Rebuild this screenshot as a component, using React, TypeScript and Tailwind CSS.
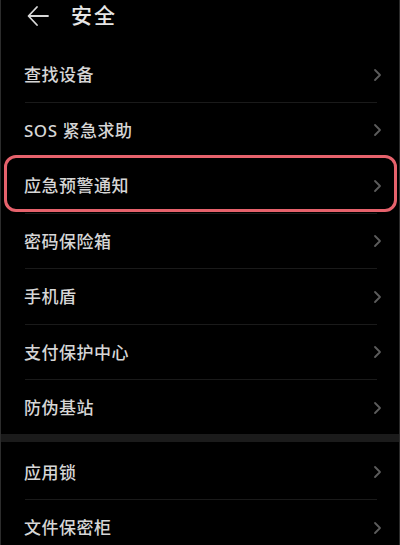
import React from 'react';

const groupA = ['查找设备', 'SOS 紧急求助', '应急预警通知', '密码保险箱', '手机盾', '支付保护中心', '防伪基站'];
const groupB = ['应用锁', '文件保密柜'];

function Chevron() {
    return (
        <svg width="9" height="14" viewBox="0 0 9 14" fill="none">
            <path d="M2 2 L7 7 L2 12" stroke="#5c5c5c" strokeWidth="1.8" strokeLinecap="round" strokeLinejoin="round" />
        </svg>
    );
}

function Row({ label, divider }: { label: string; divider: boolean }) {
    return (
        <div className="relative h-[55.5px] flex items-center pl-[23px] pr-[17px]">
            <span className="flex-1 text-[17px] font-medium text-[#d6d6d6] tracking-[0.5px]">{label}</span>
            <Chevron />
            {divider && <div className="absolute bottom-0 left-[24px] right-[22px] h-px bg-[#1a1a1a]" />}
        </div>
    );
}

export default function App() {
    return (
        <div
            className="relative w-[400px] h-[545px] overflow-hidden bg-black border-x border-[#2c2c2c]"
            style={{ fontFamily: '"Noto Sans", "Noto Sans CJK SC", sans-serif' }}
        >
            {/* header */}
            <div className="h-[32px] flex items-center pl-[25px]">
                <svg width="24" height="24" viewBox="0 0 24 24" fill="none">
                    <path d="M22 12 H3 M11 3 L2.5 12 L11 21" stroke="#d8d8d8" strokeWidth="1.8" strokeLinecap="round" strokeLinejoin="round" />
                </svg>
                <span className="ml-[21px] text-[21px] font-medium text-[#e6e6e6] tracking-[2px]">安全</span>
            </div>

            <div className="mt-[15px]">
                {groupA.map((label, i) => (
                    <Row key={label} label={label} divider={i < groupA.length - 1} />
                ))}
            </div>

            <div className="h-[8px] bg-[#1b1b1b] -mt-[2px]" />

            <div className="mt-[3px]">
                {groupB.map((label, i) => (
                    <Row key={label} label={label} divider={i < groupB.length - 1} />
                ))}
            </div>

            {/* highlight annotation */}
            <div className="absolute left-[3px] top-[155px] w-[393px] h-[57px] rounded-[12px] border-[3px] border-[#e6626c]" />
        </div>
    );
}
